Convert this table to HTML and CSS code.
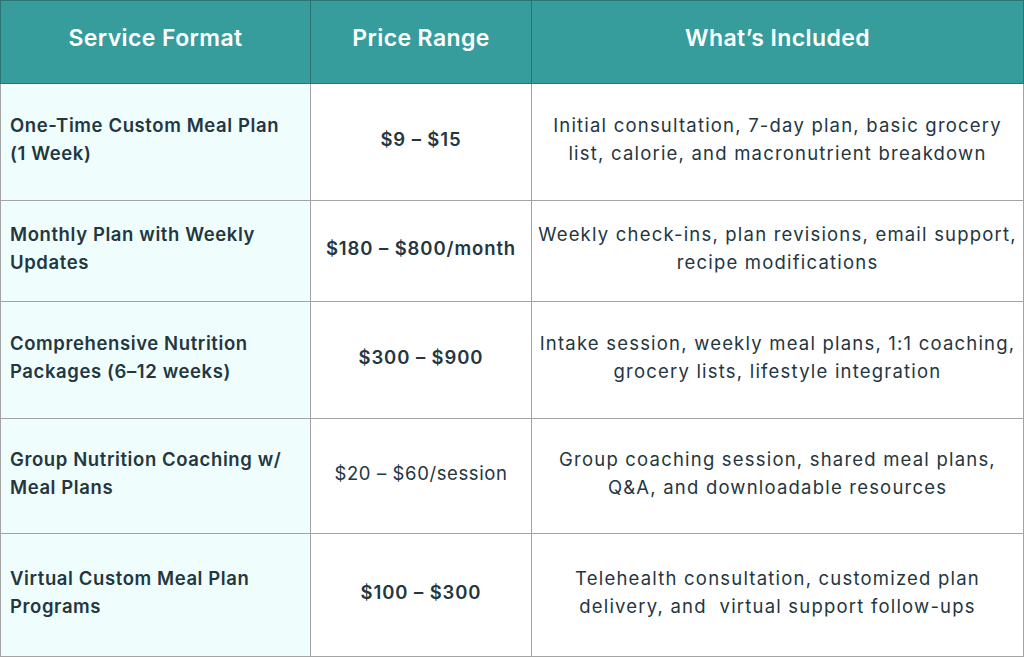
FILE: index.html
```html
<!DOCTYPE html>
<html lang="en">
<head>
<meta charset="utf-8">
<link rel="stylesheet" href="styles.css">
</head>
<body>
<table class="pricing">
  <colgroup>
    <col class="c1"><col class="c2"><col class="c3">
  </colgroup>
  <thead>
    <tr class="head">
      <th>Service Format</th>
      <th>Price Range</th>
      <th>What’s Included</th>
    </tr>
  </thead>
  <tbody>
    <tr class="r1">
      <td class="svc">One-Time Custom Meal Plan<br>(1 Week)</td>
      <td class="price">$9 – $15</td>
      <td class="inc">Initial consultation, 7-day plan, basic grocery<br>list, calorie, and macronutrient breakdown</td>
    </tr>
    <tr class="r2">
      <td class="svc">Monthly Plan with Weekly<br>Updates</td>
      <td class="price">$180 – $800/month</td>
      <td class="inc">Weekly check-ins, plan revisions, email support,<br>recipe modifications</td>
    </tr>
    <tr class="r3">
      <td class="svc">Comprehensive Nutrition<br>Packages (6–12 weeks)</td>
      <td class="price">$300 – $900</td>
      <td class="inc">Intake session, weekly meal plans, 1:1 coaching,<br>grocery lists, lifestyle integration</td>
    </tr>
    <tr class="r4">
      <td class="svc">Group Nutrition Coaching w/<br>Meal Plans</td>
      <td class="price light">$20 – $60/session</td>
      <td class="inc">Group coaching session, shared meal plans,<br>Q&amp;A, and downloadable resources</td>
    </tr>
    <tr class="r5">
      <td class="svc">Virtual Custom Meal Plan<br>Programs</td>
      <td class="price">$100 – $300</td>
      <td class="inc">Telehealth consultation, customized plan<br>delivery, and&nbsp; virtual support follow-ups</td>
    </tr>
  </tbody>
</table>
</body>
</html>
```
FILE: styles.css
```css
html, body {
  margin: 0;
  padding: 0;
  background: #ffffff;
}
body {
  font-family: "Inter", "Noto Sans", sans-serif;
  color: #24363f;
}
.pricing {
  width: 1023px;
  border-collapse: collapse;
  table-layout: fixed;
}
.c1 { width: 310px; }
.c2 { width: 221px; }
.c3 { width: 492px; }

.head th {
  height: 83px;
  background: #369d9c;
  color: #ffffff;
  font-size: 23px;
  font-weight: 600;
  letter-spacing: 0.4px;
  text-align: center;
  vertical-align: middle;
  padding: 0 0 8px;
  border: 1px solid #2c7474;
  box-sizing: border-box;
}
td {
  border: 1px solid #a3a3a3;
  font-size: 18.5px;
  line-height: 28px;
  letter-spacing: 1.2px;
  vertical-align: middle;
  padding: 0 2px 6px;
  white-space: nowrap;
}
.svc {
  background: #effefc;
  font-weight: 600;
  letter-spacing: 0.6px;
  text-align: left;
  padding-left: 9px;
}
.price {
  text-align: center;
  font-weight: 600;
  letter-spacing: 0.9px;
}
.price.light {
  font-weight: 400;
  letter-spacing: 0.6px;
}
.inc {
  text-align: center;
  font-weight: 400;
}
.r1 td { height: 110px; }
.r2 td { height: 94px; }
.r3 td { height: 110px; }
.r4 td { height: 108px; }
.r5 td { height: 116px; }
```
